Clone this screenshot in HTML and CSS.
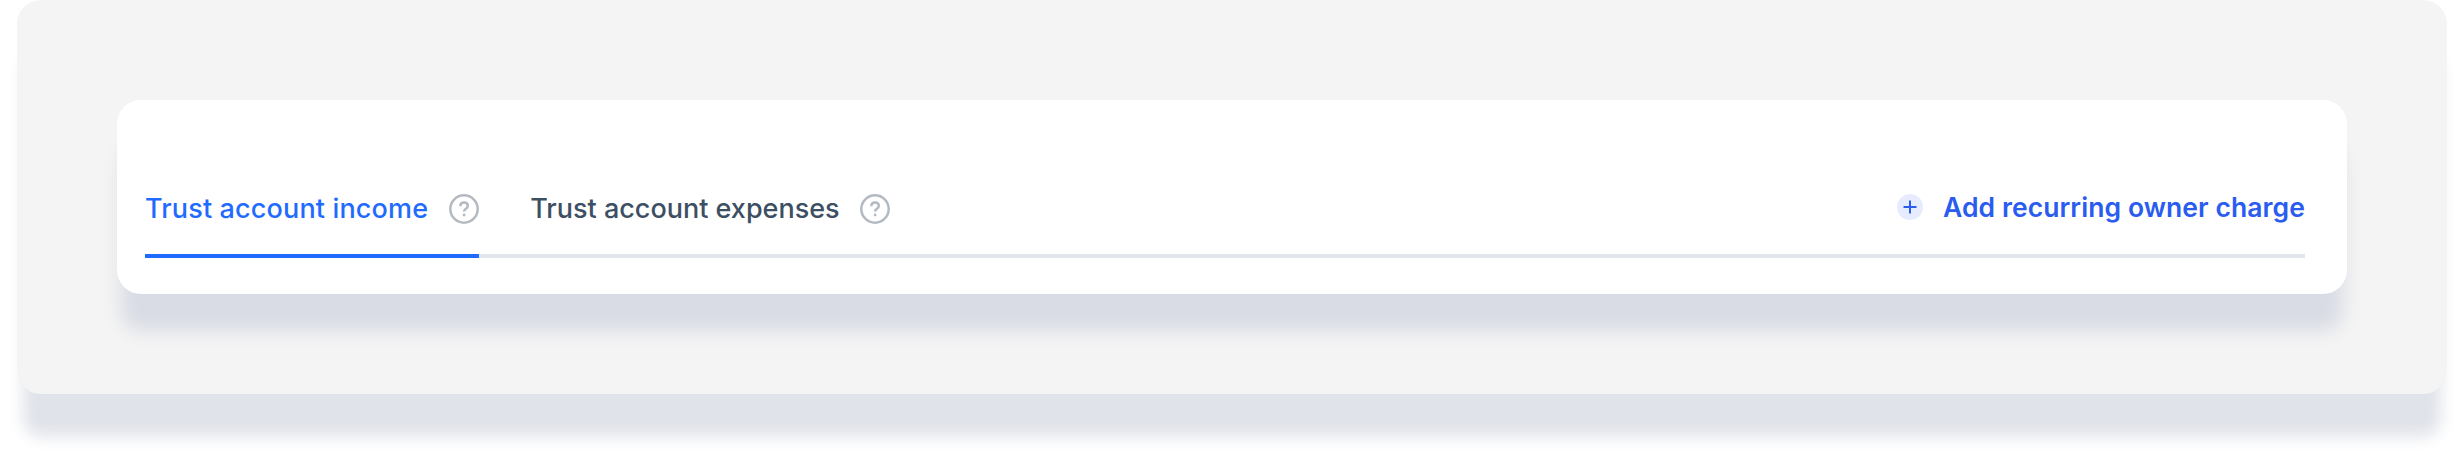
FILE: index.html
```html
<!DOCTYPE html>
<html lang="en">
<head>
  <meta charset="UTF-8" />
  <title>Recurring owner charges</title>
  <link rel="stylesheet" href="styles.css">
</head>
<body>
  <div class="outer-card">
    <div class="inner-card">
      <div class="tab-bar">
        <a class="tab active" href="#">
          <span>Trust account income</span>
          <svg class="help-icon" viewBox="0 0 30 30"><circle cx="15" cy="15" r="13.7"/><path d="M11.3 12.2c0-2.2 1.7-3.6 3.8-3.6s3.7 1.3 3.7 3.3c0 2.9-3.7 2.9-3.7 5.6"/><circle class="dot" cx="15.1" cy="21" r="1.4"/></svg>
        </a>
        <a class="tab" href="#">
          <span>Trust account expenses</span>
          <svg class="help-icon" viewBox="0 0 30 30"><circle cx="15" cy="15" r="13.7"/><path d="M11.3 12.2c0-2.2 1.7-3.6 3.8-3.6s3.7 1.3 3.7 3.3c0 2.9-3.7 2.9-3.7 5.6"/><circle class="dot" cx="15.1" cy="21" r="1.4"/></svg>
        </a>
        <a class="add-charge" href="#">
          <span class="plus-icon"><svg viewBox="0 0 26 26"><path d="M13 6.5v13M6.5 13h13"/></svg></span>
          <span>Add recurring owner charge</span>
        </a>
      </div>
    </div>
  </div>
</body>
</html>
```

FILE: styles.css
```css
:root {
  --active-blue: #1f6bff;
  --link-blue: #2a5cf0;
  --text-color: #3d4f63;
  --line-color: #e3e6ea;
}
html, body {
  height: 100%;
}
body {
  margin: 0;
  background: #fff;
  font-family: 'Inter', sans-serif;
  overflow: hidden;
}
.outer-card {
  margin: 0 17px;
  height: 394px;
  box-sizing: border-box;
  padding: 100px 100px 0;
  background: #f4f4f4;
  border-radius: 24px;
  box-shadow: 0 49px 16px -6px #e0e3e9;
}
.inner-card {
  height: 194px;
  box-sizing: border-box;
  padding: 0 42px 36px 28px;
  display: flex;
  align-items: flex-end;
  background: #fff;
  border-radius: 24px;
  box-shadow: 0 41px 18px -4px #d9dce5;
}
.tab-bar {
  flex: 1;
  display: flex;
  align-items: stretch;
  gap: 51px;
  border-bottom: 4px solid var(--line-color);
}
.tab {
  display: flex;
  align-items: center;
  gap: 20px;
  height: 74px;
  margin-bottom: -4px;
  padding-bottom: 21px;
  box-sizing: border-box;
  border-bottom: 4px solid transparent;
  font-size: 27px;
  font-weight: 500;
  color: var(--text-color);
  text-decoration: none;
}
.tab.active {
  gap: 21px;
  letter-spacing: 0.15px;
  color: var(--active-blue);
  border-bottom-color: var(--active-blue);
}
.help-icon {
  width: 30px;
  height: 30px;
  fill: none;
  stroke: #b4bac1;
  stroke-width: 2.5;
}
.help-icon .dot {
  fill: #b4bac1;
  stroke: none;
}
.add-charge {
  margin-left: auto;
  display: flex;
  align-items: center;
  gap: 20px;
  padding-bottom: 24px;
  font-size: 26.5px;
  font-weight: 600;
  letter-spacing: 0.08px;
  color: var(--link-blue);
  text-decoration: none;
}
.plus-icon {
  width: 26px;
  height: 26px;
  border-radius: 50%;
  background: #e6ecfd;
  display: flex;
}
.plus-icon svg {
  width: 26px;
  height: 26px;
  fill: none;
  stroke: var(--link-blue);
  stroke-width: 2;
}
```
